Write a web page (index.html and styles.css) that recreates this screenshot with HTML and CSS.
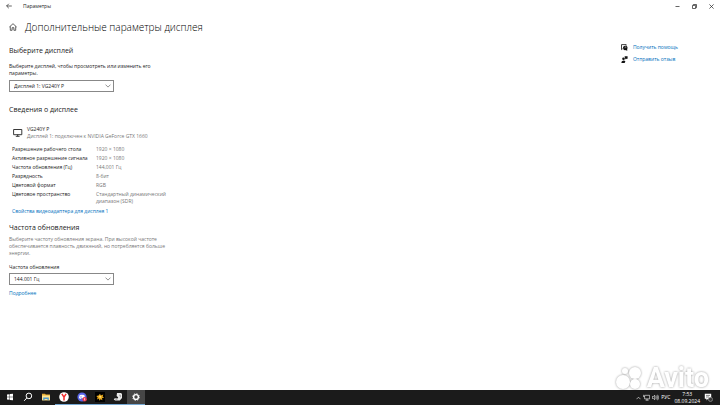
FILE: index.html
```html
<!DOCTYPE html>
<html lang="ru">
<head>
<meta charset="utf-8">
<title>Параметры</title>
<link rel="stylesheet" href="styles.css">
</head>

<body>

<header class="titlebar">
	<button class="back" aria-label="Назад">
		<svg width="6" height="6" viewBox="0 0 6 6"><path d="M5.8 3H.6M2.8.8L.6 3l2.2 2.2"/></svg>
	</button>
	<span class="app-name">Параметры</span>
	<button class="win-button" aria-label="Свернуть">
		<svg width="5" height="5" viewBox="0 0 5 5"><path d="M.5 2.5h4"/></svg>
	</button>
	<button class="win-button" aria-label="Свернуть в окно">
		<svg width="5" height="5" viewBox="0 0 5 5"><path d="M.5 1.4h3.1v3.1H.5zM1.4 1.4V.5h3.1v3.1h-.9"/></svg>
	</button>
	<button class="win-button" aria-label="Закрыть">
		<svg width="5" height="5" viewBox="0 0 5 5"><path d="M.4.4l4.2 4.2M4.6.4L.4 4.6"/></svg>
	</button>
</header>

<main class="page">
	<div class="settings">
		<div class="heading">
			<svg width="8" height="8" viewBox="0 0 8 8"><path d="M.4 4L4 .7 7.6 4M1.3 3.4v3.9h1.8V4.7h1.8v2.6h1.8V3.4"/></svg>
			<h1>Дополнительные параметры дисплея</h1>
		</div>

		<section class="choose">
			<h2>Выберите дисплей</h2>
			<label for="display">Выберите дисплей, чтобы просмотреть или изменить его параметры.</label>
			<div class="select-box">
				<select id="display">
					<option>Дисплей 1: VG240Y P</option>
				</select>
				<svg width="6" height="4" viewBox="0 0 6 4"><path d="M.5.6L3 3.1 5.5.6"/></svg>
			</div>
		</section>

		<section class="info">
			<h2>Сведения о дисплее</h2>
			<div class="monitor">
				<svg width="10" height="8" viewBox="0 0 10 8"><path d="M.6.5h8.2v5.2H.6zM4.7 5.7v1.6M2.8 7.3h3.8"/></svg>
				<div>
					<p>VG240Y P</p>
					<p class="muted">Дисплей 1: подключен к NVIDIA GeForce GTX 1660</p>
				</div>
			</div>
			<table class="details">
				<tr><th scope="row">Разрешение рабочего стола</th><td>1920 × 1080</td></tr>
				<tr><th scope="row">Активное разрешение сигнала</th><td>1920 × 1080</td></tr>
				<tr><th scope="row">Частота обновления (Гц)</th><td>144,001 Гц</td></tr>
				<tr><th scope="row">Разрядность</th><td>8-бит</td></tr>
				<tr><th scope="row">Цветовой формат</th><td>RGB</td></tr>
				<tr><th scope="row">Цветовое пространство</th><td>Стандартный динамический диапазон (SDR)</td></tr>
			</table>
			<a class="adapter" href="#">Свойства видеоадаптера для дисплея 1</a>
		</section>

		<section class="rate">
			<h2>Частота обновления</h2>
			<p class="muted">Выберите частоту обновления экрана. При высокой частоте обеспечивается плавность движений, но потребляется больше энергии.</p>
			<label for="rate">Частота обновления</label>
			<div class="select-box">
				<select id="rate">
					<option>144.001 Гц</option>
				</select>
				<svg width="6" height="4" viewBox="0 0 6 4"><path d="M.5.6L3 3.1 5.5.6"/></svg>
			</div>
			<a href="#">Подробнее</a>
		</section>
	</div>

	<nav class="help">
		<a href="#">
			<svg width="7" height="7" viewBox="0 0 7 7"><path class="line" d="M1.7 4.7L.5 5.6V.6h4.7v1"/><path class="solid" d="M4.3 1.7a2.2 2.2 0 0 1 1.9 3.4V7L4.9 6A2.2 2.2 0 1 1 4.3 1.7z"/><path class="mark" d="M3.6 3.2q.7-.8 1.3 0 .1.4-.6 1"/></svg>
			Получить помощь
		</a>
		<a href="#">
			<svg width="7" height="7" viewBox="0 0 7 7"><circle class="solid" cx="2.5" cy="2.7" r="1.3"/><path class="solid" d="M.3 7q0-2.6 2.2-2.6 1.5 0 1.9 1L3.6 7zM3.6.2h3v2.5H5.6l-1 .9v-.9h-.5z"/></svg>
			Отправить отзыв
		</a>
	</nav>
</main>

<footer class="taskbar">
	<button class="task" aria-label="Пуск">
		<svg width="8" height="8" viewBox="0 0 8 8"><path fill="#fff" d="M1 1.6l2.6-.4v2.6H1zM4 1.1L7 .7v3.1H4zM1 4.2h2.6v2.6L1 6.4zM4 4.2h3v3.1l-3-.4z"/></svg>
	</button>
	<button class="task" aria-label="Поиск">
		<svg width="10" height="10" viewBox="0 0 10 10"><circle cx="5.9" cy="3.9" r="2.8" fill="none" stroke="#fff"/><path d="M3.9 5.9L1.2 8.8" stroke="#fff"/></svg>
	</button>
	<button class="task" aria-label="Проводник">
		<svg width="10" height="8" viewBox="0 0 10 8"><path fill="#e5ad35" d="M1 .8h3l.8.8H9v5.7H1z"/><path fill="#ffe391" d="M1 2.5h8v4.8H1z"/><path fill="#4d9bd0" d="M2.2 4.6h5.6v2.7H6.5V6h-3v1.3H2.2z"/></svg>
	</button>
	<button class="task open" aria-label="Яндекс Браузер">
		<svg width="10" height="10" viewBox="0 0 10 10"><circle cx="5" cy="5" r="4.8" fill="#fff"/><path d="M2.9 1.9L5 5.1v3.3M7.1 1.9L5 5.1" fill="none" stroke="#f12b2b" stroke-width="1.5"/></svg>
	</button>
	<button class="task open" aria-label="Discord">
		<svg width="10" height="10" viewBox="0 0 10 10"><circle cx="5" cy="5" r="4.6" fill="#5865e8"/><path fill="#fff" d="M2.7 3.1q2.3-.9 4.6 0l.8 3-1.7.9-.6-.7H4.2l-.6.7-1.7-.9z"/><circle cx="4" cy="4.9" r=".6" fill="#5865e8"/><circle cx="7.6" cy="7.3" r="2.2" fill="#e8384d"/><path d="M7.6 6.1v2.3" stroke="#fff" stroke-width=".7"/></svg>
	</button>
	<button class="task open" aria-label="Игра">
		<svg width="10" height="10" viewBox="0 0 10 10"><path fill="#000" d="M0 0h10v10H0z"/><path fill="#e9a91c" d="M1.3 4l2.3-.4L5 1.7l.8 1.7 2.5-.9-.7 2 1.5 1.3-2.1.3.4 2.1-1.8-1-1.3 1.5L4 6.6l-2.1.8.8-1.8z"/><circle cx="5.2" cy="4.8" r="1" fill="#ffe184"/></svg>
	</button>
	<button class="task open" aria-label="Steam">
		<svg width="10" height="10" viewBox="0 0 10 10"><path fill="#e9e9e9" d="M4 1h4l1 1v4L6.8 8.6H2.2L.8 7.4l.9-1.2 2.9.3.6-1.3L3.6 4z"/><path d="M6 3.2h1.4v2M2.4 7.4h2" fill="none" stroke="#777" stroke-width=".6"/></svg>
	</button>
	<button class="task open active" aria-label="Параметры">
		<svg width="10" height="10" viewBox="0 0 10 10"><circle cx="5" cy="5" r="2.4" fill="none" stroke="#fff" stroke-width="1.4"/><circle cx="5" cy="5" r="3.4" fill="none" stroke="#fff" stroke-width=".8" stroke-dasharray="1.34 1.33"/></svg>
	</button>

	<div class="tray">
		<svg width="5" height="4" viewBox="0 0 5 4"><path d="M.5 3.2l2-2 2 2"/></svg>
		<svg width="7" height="7" viewBox="0 0 7 7"><path d="M.4.8v1.8h1.2M1.6 1.3h5v3.6h-5zM4 4.9v1.3M2.6 6.2h3"/></svg>
		<svg width="7" height="7" viewBox="0 0 7 7"><path d="M.4 2.5h1l1.3-1.3v4.6L1.4 4.5h-1zM3.8 2.4q.8 1.1 0 2.2M4.7 1.6q1.5 1.9 0 3.8M5.6.8q2.1 2.7 0 5.4"/></svg>
		<span class="lang">РУС</span>
		<time class="clock" datetime="2024-09-08T07:53">7:53<br>08.09.2024</time>
		<svg class="notice" width="9" height="9" viewBox="0 0 9 9"><path fill="#fff" stroke="none" d="M.8.8h6.4v5H4L2.5 7.4V5.8H.8z"/><path stroke="#333" d="M2 2.4h4M2 4h3"/><circle cx="6.5" cy="6.4" r="2.1" fill="#333" stroke="#aaa"/></svg>
	</div>
</footer>

<div class="watermark">
	<svg width="28" height="25" viewBox="0 0 28 25"><circle cx="10" cy="5" r="3"/><circle cx="20" cy="7" r="6"/><circle cx="8" cy="16" r="7"/><circle cx="20" cy="18" r="5"/></svg>
	<span>Avito</span>
</div>

</body>
</html>
```
FILE: styles.css
```css
* {
	box-sizing: border-box;
}

body {
	background: #fff;
	color: #222;
	display: flex;
	flex-direction: column;
	font-family: "Open Sans", "Noto Sans", sans-serif;
	font-size: 5px;
	line-height: 7px;
	margin: 0;
	min-height: 100vh;
	position: relative;
}

h1, h2, p {
	font-weight: normal;
	margin: 0;
}

h1 {
	color: #000;
	font-size: 10px;
	font-weight: 300;
	line-height: 14px;
}

h2 {
	font-size: 7px;
	line-height: 10px;
}

a {
	color: #0070bd;
	text-decoration: none;
}

button {
	background: none;
	border: 0;
	padding: 0;
}

svg {
	display: block;
	flex: none;
}

label {
	display: block;
}

.muted {
	color: #777;
}

/* title bar */

.titlebar {
	align-items: center;
	display: flex;
	height: 12px;
	padding-left: 6px;
}

.titlebar svg, .heading svg, .monitor svg, .select-box svg {
	fill: none;
	stroke: #222;
	stroke-width: .7;
}

.app-name {
	flex: 1;
	padding-left: 11px;
}

.win-button {
	display: flex;
	justify-content: center;
	width: 17px;
}

/* page */

.page {
	display: flex;
	flex: 1;
	justify-content: space-between;
	padding: 8px 42px 8px 9px;
}

.settings {
	width: 165px;
}

.heading {
	align-items: center;
	display: flex;
	gap: 8px;
	margin-bottom: 12px;
	white-space: nowrap;
}

.choose h2 {
	margin-bottom: 7px;
}

.choose label {
	margin-bottom: 3px;
	width: 150px;
}

.select-box {
	align-items: center;
	display: grid;
	width: 105px;
}

.select-box select, .select-box svg {
	grid-area: 1 / 1;
}

.select-box select {
	appearance: none;
	background: #fff;
	border: 1px solid #888;
	border-radius: 0;
	color: #222;
	font: inherit;
	height: 12px;
	padding: 0 4px;
	width: 100%;
}

.select-box svg {
	justify-self: end;
	margin-right: 3px;
	pointer-events: none;
	stroke: #666;
}

.info {
	margin-top: 13px;
}

.monitor {
	align-items: center;
	display: flex;
	gap: 4px;
	margin: 11px 0 6px 4px;
	white-space: nowrap;
}

.monitor svg {
	stroke-width: .9;
}

.details {
	border-collapse: collapse;
	margin-left: 3px;
}

.details th, .details td {
	font-weight: normal;
	padding: 0 0 2px;
	text-align: left;
	vertical-align: top;
}

.details th {
	white-space: nowrap;
	width: 84px;
}

.details td {
	color: #777;
	width: 78px;
}

.adapter {
	display: block;
	margin: 1px 0 0 3px;
}

.rate {
	margin-top: 8px;
}

.rate p {
	margin: 3px 0 7px;
}

.rate label {
	margin-bottom: 2px;
}

.rate a {
	display: block;
	margin-top: 5px;
}

.help {
	display: flex;
	flex-direction: column;
	gap: 5px;
	padding-top: 24px;
}

.help a {
	align-items: center;
	display: flex;
	gap: 5px;
}

.help .solid {
	fill: #111;
}

.help .line {
	fill: none;
	stroke: #111;
	stroke-width: .8;
}

.help .mark {
	fill: none;
	stroke: #fff;
	stroke-width: .5;
}

/* taskbar */

.taskbar {
	background: #1b1b1b;
	color: #fff;
	display: flex;
	height: 15px;
	padding-left: 1px;
}

.task {
	align-items: center;
	border-bottom: 1px solid transparent;
	display: flex;
	justify-content: center;
	width: 18px;
}

.task.open {
	border-color: #76a9d4;
}

.task.active {
	background: #464646;
}

.tray {
	align-items: center;
	display: flex;
	gap: 2px;
	margin-left: auto;
	padding-right: 7px;
}

.tray svg {
	fill: none;
	stroke: #fff;
	stroke-width: .6;
}

.clock {
	padding: 0 2px;
	text-align: center;
}

/* photo watermark over the lower right corner */

.watermark {
	align-items: center;
	bottom: 14px;
	color: #fff;
	display: flex;
	filter: drop-shadow(0 0 1px rgba(0, 0, 0, .4));
	font: bold 27px/25px Roboto, sans-serif;
	gap: 4px;
	pointer-events: none;
	position: absolute;
	right: 11px;
}

.watermark svg {
	fill: #fff;
}
```
